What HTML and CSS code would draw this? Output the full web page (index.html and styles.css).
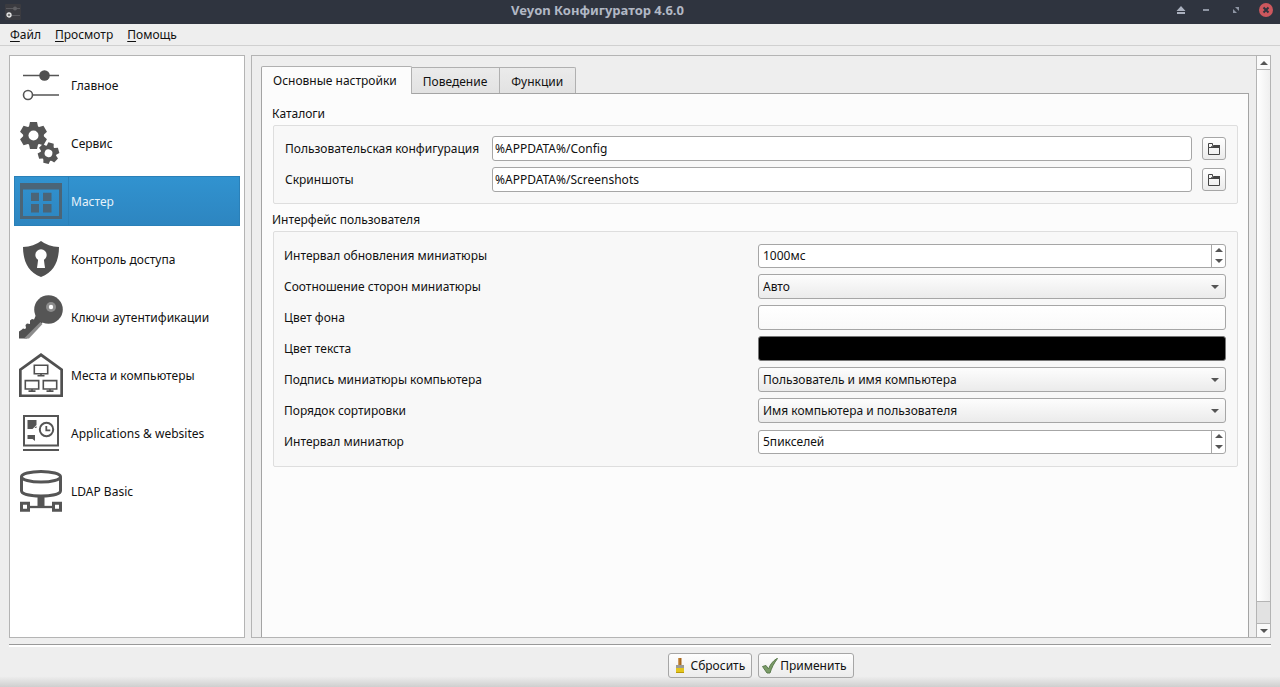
FILE: index.html
```html
<!DOCTYPE html>
<html lang="ru">
<head>
<meta charset="utf-8">
<title>Veyon Конфигуратор 4.6.0</title>
<link rel="stylesheet" href="styles.css">
</head>
<body>
<header class="titlebar">
  <svg class="app-icon" width="16" height="16" viewBox="0 0 16 16" aria-hidden="true">
    <rect width="16" height="16" rx="1" fill="#3b3b40"/>
    <path d="M1 4.500h14M6 11.500h9" stroke="#5a5a5f"/><circle cx="10" cy="4.500" r="2" fill="#5f5f63"/>
    <circle cx="4" cy="11" r="2" fill="#777" stroke="#e8e8e8" stroke-width="1.300"/>
  </svg>
  <h1 class="window-title">Veyon Конфигуратор 4.6.0</h1>
  <div class="window-controls">
    <button class="wc shade" aria-label="Свернуть в заголовок"><svg width="14" height="14" viewBox="0 0 14 14"><path d="M7 3l4.500 5h-9zM3 9h8v2H3z" fill="#aab0be"/></svg></button>
    <button class="wc" aria-label="Свернуть"><svg width="14" height="14" viewBox="0 0 14 14"><path d="M4 6h6v2H4z" fill="#8e95a3"/></svg></button>
    <button class="wc" aria-label="Восстановить"><svg width="14" height="14" viewBox="0 0 14 14"><path d="M6 4h4v4zM4 6l4 4H4z" fill="#8e95a3"/></svg></button>
    <button class="wc" aria-label="Закрыть"><svg width="14" height="14" viewBox="0 0 14 14"><circle cx="7" cy="7" r="7" fill="#cc575d"/><path d="M4.500 4.500l5 5M9.500 4.500l-5 5" stroke="#2f343f" stroke-width="2"/></svg></button>
  </div>
</header>

<nav class="menubar" aria-label="Меню">
  <button class="menu"><u>Ф</u>айл</button>
  <button class="menu"><u>П</u>росмотр</button>
  <button class="menu"><u>П</u>омощь</button>
</nav>

<main class="workspace">
  <nav class="sidebar" aria-label="Разделы">
    <button class="page-item">
      <svg class="page-icon" viewBox="0 0 44 44"><g stroke="#555" fill="none"><path d="M4 12.500h36M14 32h26" stroke-width="1.700"/><circle cx="9" cy="32" r="4.500" stroke-width="1.600"/></g><circle cx="25.500" cy="12.500" r="5.300" fill="#505050"/></svg>
      <span class="page-name">Главное</span>
    </button>
    <button class="page-item">
      <svg class="page-icon" viewBox="0 0 44 44">
        <g transform="translate(14.500 14.500)"><circle r="10.300" fill="#555"/><g fill="#555"><path id="tooth" d="M-4.500-9L-3.500-13.500H3.500L4.500-9V9L3.500 13.500H-3.500L-4.500 9Z"/><use href="#tooth" transform="rotate(60)"/><use href="#tooth" transform="rotate(120)"/></g><circle r="5" fill="#fff"/></g>
        <g transform="translate(29.500 32.200) rotate(14) scale(.78)"><circle r="10" fill="#555"/><g fill="#555"><use href="#tooth"/><use href="#tooth" transform="rotate(60)"/><use href="#tooth" transform="rotate(120)"/></g><circle r="5" fill="#fff"/></g>
      </svg>
      <span class="page-name">Сервис</span>
    </button>
    <button class="page-item selected" aria-current="page">
      <svg class="page-icon" viewBox="0 0 44 44"><path fill="#4b6577" fill-rule="evenodd" d="M1 4h42v36H1zM4 10.500v26.500h36v-26.500z"/><path fill="#4b6577" d="M12 13.700h8V22h-8zM24 13.700h8.500V22H24zM12 25h8v8.500h-8zM24 25h8.500v8.500H24z"/></svg>
      <span class="page-name">Мастер</span>
    </button>
    <button class="page-item">
      <svg class="page-icon" viewBox="0 0 44 44"><path d="M22 4Q15 9.500 4 10C4 22 8 35 22 40C36 35 40 22 40 10Q29 9.500 22 4Z" fill="#505050"/><circle cx="22" cy="18" r="5.700" fill="#fff"/><path d="M19.500 20h5l1.500 11h-8z" fill="#fff"/></svg>
      <span class="page-name">Контроль доступа</span>
    </button>
    <button class="page-item">
      <svg class="page-icon" viewBox="0 0 44 44"><path d="M17 20l7 7L8 43.500H0v-7l3-2 1-1 2 .5 1-1-.5-3 1.500-1.500 3 .5V25.500l2-1.500 2 .5z" fill="#505050"/><path d="M5 43.500L21.500 27l2 2L10 43.500z" fill="#8c8c8c"/><circle cx="29.500" cy="14.500" r="14.300" fill="#555"/><circle cx="32" cy="12" r="5" fill="#8c8c8c"/><circle cx="32" cy="12" r="2.200" fill="#fff"/></svg>
      <span class="page-name">Ключи аутентификации</span>
    </button>
    <button class="page-item">
      <svg class="page-icon" viewBox="0 0 44 44"><path d="M1.300 42.800V16.700L22 1.800L42.700 16.700V42.800z" fill="none" stroke="#505050" stroke-width="2.800"/><g id="pc" fill="none" stroke="#505050" stroke-width="1.600"><path d="M15.300 12.300h13.400v8.400H15.300zM22 21v2M18.500 22.800h7"/></g><use href="#pc" x="-9" y="15.300"/><use href="#pc" x="9" y="15.300"/></svg>
      <span class="page-name">Места и компьютеры</span>
    </button>
    <button class="page-item">
      <svg class="page-icon" viewBox="0 0 44 44"><path d="M5 5h34v29.500H5z" fill="none" stroke="#555" stroke-width="2"/><path d="M4 38h36v2H4zM8.500 9h9v5l-4 4h-5zM15.500 17l2-2v2zM8.500 24h7.500v6l-2.500-2h-5z" fill="#555"/><circle cx="27.500" cy="18.500" r="6.700" fill="none" stroke="#555" stroke-width="2"/><path d="M27.300 15v4.300h4" fill="none" stroke="#555" stroke-width="1.800"/></svg>
      <span class="page-name">Applications &amp; websites</span>
    </button>
    <button class="page-item">
      <svg class="page-icon" viewBox="0 0 44 44"><g fill="none" stroke="#555" stroke-width="3"><ellipse cx="22" cy="7.700" rx="19.500" ry="5.300"/><path d="M2.500 7.700v14c0 7 39 7 39 0v-14M2.500 34.200h7v7h-7zM34.500 34.200h7v7h-7z"/><path d="M11 38h22" stroke-width="2.300"/></g><path d="M18.500 27h7v11h-7z" fill="#555"/></svg>
      <span class="page-name">LDAP Basic</span>
    </button>
  </nav>

  <section class="settings">
    <div class="page">
      <div class="tabs" role="tablist">
        <button class="tab active" role="tab" aria-selected="true">Основные настройки</button>
        <button class="tab" role="tab">Поведение</button>
        <button class="tab" role="tab">Функции</button>
      </div>
      <div class="pane" role="tabpanel">
        <h2 class="group-title">Каталоги</h2>
        <div class="group directories">
          <label for="config-dir">Пользовательская конфигурация</label>
          <input class="field" id="config-dir" type="text" value="%APPDATA%/Config">
          <button class="browse" aria-label="Выбрать каталог конфигурации"><svg width="14" height="14" viewBox="0 0 14 14"><path d="M1.500 1.500h4v2l-1.500 2h-2.500zM1.500 5.500h11v7h-11z" fill="none" stroke="#444"/><path d="M4 6l2.500-3H13v3z" fill="#444"/></svg></button>
          <label for="shots-dir">Скриншоты</label>
          <input class="field" id="shots-dir" type="text" value="%APPDATA%/Screenshots">
          <button class="browse" aria-label="Выбрать каталог скриншотов"><svg width="14" height="14" viewBox="0 0 14 14"><path d="M1.500 1.500h4v2l-1.500 2h-2.500zM1.500 5.500h11v7h-11z" fill="none" stroke="#444"/><path d="M4 6l2.500-3H13v3z" fill="#444"/></svg></button>
        </div>

        <h2 class="group-title">Интерфейс пользователя</h2>
        <div class="group interface">
          <label for="interval">Интервал обновления миниатюры</label>
          <div class="spin"><input id="interval" type="text" value="1000мс"><div class="steps"><button class="step up" aria-label="Увеличить"></button><button class="step down" aria-label="Уменьшить"></button></div></div>
          <label for="ratio">Соотношение сторон миниатюры</label>
          <div class="combo"><select id="ratio"><option>Авто</option></select></div>
          <label for="bg-color">Цвет фона</label>
          <button class="color light" id="bg-color"></button>
          <label for="text-color">Цвет текста</label>
          <button class="color dark" id="text-color"></button>
          <label for="caption">Подпись миниатюры компьютера</label>
          <div class="combo"><select id="caption"><option>Пользователь и имя компьютера</option></select></div>
          <label for="order">Порядок сортировки</label>
          <div class="combo"><select id="order"><option>Имя компьютера и пользователя</option></select></div>
          <label for="spacing">Интервал миниатюр</label>
          <div class="spin"><input id="spacing" type="text" value="5пикселей"><div class="steps"><button class="step up" aria-label="Увеличить"></button><button class="step down" aria-label="Уменьшить"></button></div></div>
        </div>
      </div>
    </div>
    <div class="scrollbar">
      <button class="step up" aria-label="Прокрутить вверх"></button>
      <div class="thumb"></div>
      <div class="track"></div>
      <button class="step down" aria-label="Прокрутить вниз"></button>
    </div>
  </section>
</main>

<footer class="actions">
  <button class="action"><svg width="16" height="16" viewBox="0 0 16 16"><path d="M6.500 0h3v8h-3z" fill="#a8681c"/><path d="M6.500 0h1v8h-1z" fill="#c98a3c"/><path d="M4 7h8v3H4z" fill="#9a9a94"/><path d="M4 10h8v5H4z" fill="#e3c51d"/><path d="M4 14h8v1H4z" fill="#b8980c"/></svg>Сбросить</button>
  <button class="action"><svg width="16" height="16" viewBox="0 0 16 16"><path d="M.5 8.500l3.500-1 2.500 3.500C8 7 10.500 3 15 .5h.5C12 5 9.500 10 8 15H5z" fill="#7b9c68" stroke="#5b7a4c"/></svg>Применить</button>
</footer>
</body>
</html>
```
FILE: styles.css
```css
* { box-sizing: border-box; }

body {
  margin: 0;
  min-height: 100vh;
  display: flex;
  flex-direction: column;
  background: #eeeeee;
  color: #111;
  font: 12px/16px "Noto Sans", sans-serif;
}

button, input, select {
  margin: 0;
  padding: 0;
  border: 0;
  background: none;
  color: inherit;
  font: inherit;
}

button svg { display: block; }

.titlebar {
  display: flex;
  align-items: center;
  height: 24px;
  padding: 0 7px 0 5px;
  background: #2f343f;
  color: #b2b8c5;
}
.app-icon { display: block; }
.window-title {
  flex: 1;
  margin: 0;
  font-size: 13px;
  font-weight: 700;
  line-height: 20px;
  text-align: center;
  padding-bottom: 4px;
}
.window-controls { display: flex; gap: 16px; padding-bottom: 4px; }
.shade { margin-right: -5px; }

.menubar {
  display: flex;
  gap: 14px;
  height: 22px;
  padding: 0 10px;
  border-bottom: 1px solid #d0d0d0;
}
.menu u { text-underline-offset: 2px; }

.workspace {
  flex: 1;
  display: flex;
  gap: 6px;
  padding: 9px 9px 6px;
}

.sidebar {
  display: flex;
  flex-direction: column;
  gap: 8px;
  width: 236px;
  padding: 4px;
  border: 1px solid #b4b4b4;
  background: #fff;
}
.page-item {
  display: flex;
  align-items: center;
  height: 50px;
  padding-left: 5px;
  text-align: left;
}
.page-icon { width: 44px; height: 44px; }
.page-name {
  flex: 1;
  align-self: stretch;
  display: flex;
  align-items: center;
  margin-left: 5px;
  padding: 2px 0 0 3px;
}
.selected {
  background: linear-gradient(#3193d0, #2d85c0);
  box-shadow: inset 0 0 0 1px #2a80b8;
  color: #e6f2fa;
}
.selected .page-name { border-left: 1px solid #2a80b8; padding-left: 2px; }

.settings {
  flex: 1;
  display: flex;
  border: 1px solid #b4b4b4;
}
.page {
  flex: 1;
  display: flex;
  flex-direction: column;
  padding: 10px 7px 0 9px;
}
.tabs {
  display: flex;
  align-items: flex-end;
  height: 28px;
}
.tab {
  height: 26px;
  padding: 2px 12px 0 11px;
  margin-bottom: 1px;
  border: 1px solid #b0b0b0;
  border-left: 0;
  border-bottom: 0;
  background: linear-gradient(#ebebeb, #e2e2e2);
}
.tab:last-child { border-radius: 0 2px 0 0; }
.tab.active {
  z-index: 1;
  height: 28px;
  margin-bottom: 0;
  padding: 0 14px 0 11px;
  border-left: 1px solid #a4a4a4;
  border-radius: 2px 2px 0 0;
  background: #fcfcfc;
}
.pane {
  flex: 1;
  margin-top: -1px;
  padding: 12px 10px 0;
  border: 1px solid #a4a4a4;
  border-bottom: 0;
  background: #fcfcfc;
}

.group-title {
  margin: 0 0 3px;
  font-size: 12px;
  font-weight: 400;
  line-height: 16px;
}
.group {
  display: grid;
  align-items: center;
  row-gap: 6px;
  margin: 0 0 8px 1px;
  border: 1px solid #dedede;
  border-radius: 2px;
  background: #f8f8f8;
}
.directories {
  grid-template-columns: minmax(197px, auto) 1fr 24px;
  column-gap: 10px;
  grid-auto-rows: 25px;
  padding: 10px 11px 11px;
}
.interface {
  grid-template-columns: 1fr 1fr;
  column-gap: 6px;
  grid-auto-rows: 25px;
  padding: 11px 11px 12px 10px;
}

.field, .spin, .combo, .color, .browse, .action {
  border: 1px solid #a6a6a6;
  border-radius: 3px;
}
.field {
  height: 25px;
  min-width: 0;
  padding: 0 2px;
  background: #fff;
}
.browse {
  height: 23px;
  display: grid;
  place-items: center;
  background: linear-gradient(#fff, #ebebeb);
}
.spin {
  display: flex;
  height: 24px;
  background: #fff;
}
.spin input { flex: 1; min-width: 0; padding-left: 4px; }
.steps {
  display: flex;
  flex-direction: column;
  width: 14px;
  border-left: 1px solid #a6a6a6;
}
.step {
  display: grid;
  place-items: center;
}
.steps .step { flex: 1; }
.step::before {
  content: "";
  border: 4px solid transparent;
  border-top-width: 0;
  border-bottom-width: 0;
}
.step.up::before { border-bottom: 4px solid #555; }
.step.down::before { border-top: 4px solid #555; }

.combo {
  display: grid;
  align-items: center;
  height: 25px;
  background: linear-gradient(#fdfdfd, #ebebeb);
}
.combo select {
  grid-area: 1 / 1;
  height: 100%;
  padding: 0 24px 0 4px;
  appearance: none;
}
.combo::after {
  content: "";
  grid-area: 1 / 1;
  justify-self: end;
  margin-right: 6px;
  border: 4px solid transparent;
  border-top-color: #555;
  border-bottom: 0;
  pointer-events: none;
}
.color { height: 25px; }
.light { background: linear-gradient(#fff, #f9f9f9); }
.dark { background: #000; border-color: #777; }

.scrollbar {
  display: flex;
  flex-direction: column;
  width: 14px;
  border-left: 1px solid #b4b4b4;
}
.scrollbar .step { height: 13px; background: #fafafa; }
.thumb {
  flex: 1;
  border: solid #b4b4b4;
  border-width: 1px 0;
  background: linear-gradient(90deg, #fff, #efefef);
}
.track {
  height: 22px;
  border-bottom: 1px solid #b4b4b4;
  background: #e2e2e2;
}

.actions {
  display: flex;
  justify-content: center;
  gap: 6px;
  padding: 9px 0 9px 242px;
  position: relative;
  background: linear-gradient(#eeeeee 75%, #cfcfcf);
}
.actions::before {
  content: "";
  position: absolute;
  inset: 0 9px auto;
  height: 2px;
  border-top: 1px solid #999;
  background: #fff;
}
.action {
  display: flex;
  align-items: center;
  gap: 2px;
  height: 25px;
  padding: 0 6px 0 3px;
  background: linear-gradient(#fefefe, #ececec);
}
```
